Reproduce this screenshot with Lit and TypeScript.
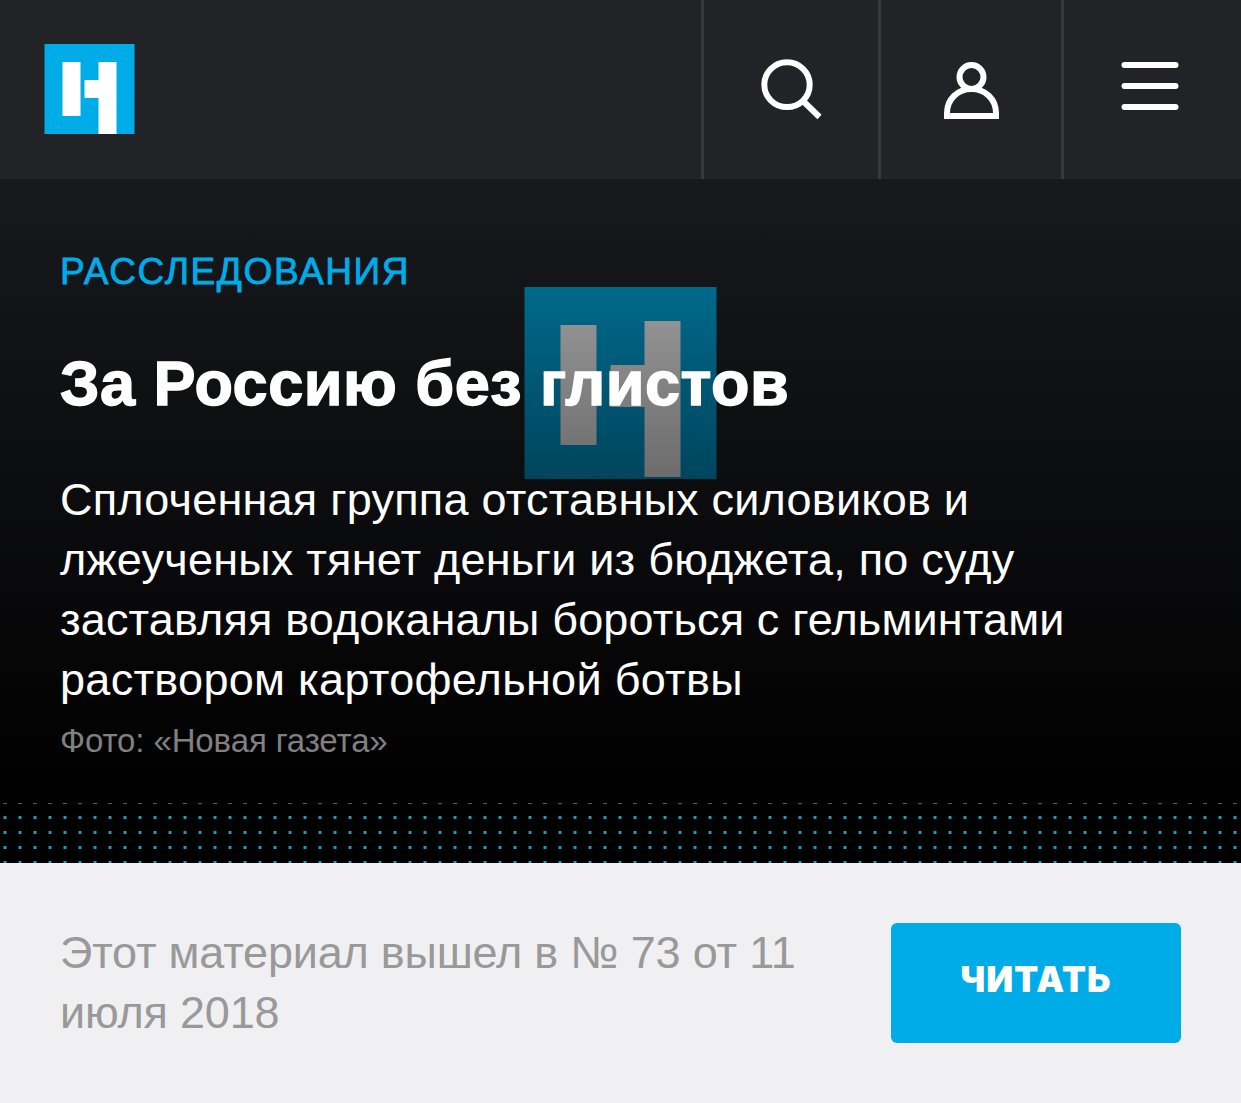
import {LitElement, html, css} from 'lit';
import {customElement} from 'lit/decorators.js';

@customElement('site-header')
export class SiteHeader extends LitElement {
  static styles = css`
    :host {
      display: flex;
      height: 179px;
      background: #222327;
    }

    .logo {
      width: 91px;
      height: 90px;
      margin: 44px auto 0 44px;
    }

    .cell {
      box-sizing: border-box;
      width: 177px;
      border-left: 3px solid #39393d;
    }

    .cell.user {
      width: 183px;
    }

    .cell.menu {
      width: 180px;
    }

    .icon {
      display: block;
      width: 100%;
      height: 100%;
      fill: none;
      stroke: #fff;
      stroke-width: 6;
    }
  `;

  render() {
    return html`
      <svg class="logo" viewBox="-0.5 0 91 90">
        <path fill="#00ace8" d="M0 0h90v90H0z" />
        <path fill="#fff" d="M18 18h18v54H18zM54 18h18v72H54V54H40V36h14z" />
      </svg>
      <div class="cell">
        <svg class="icon" viewBox="0 0 174 179">
          <ellipse cx="83" cy="84.700" rx="22.700" ry="22.400" />
          <path d="M99 101L115.500 117" />
        </svg>
      </div>
      <div class="cell user">
        <svg class="icon" viewBox="0 0 180 179">
          <circle cx="90.500" cy="77" r="12" />
          <path d="M66 116v-3C66 99 77 89 90.500 89S115 99 115 113v3z" />
        </svg>
      </div>
      <div class="cell menu">
        <svg class="icon" viewBox="0 0 177 179" stroke-linecap="round">
          <path d="M60.500 65h51M60.500 86h51M60.500 107h51" />
        </svg>
      </div>
    `;
  }
}

const LEAD = [
  {text: 'Сплоченная группа отставных силовиков и', spacing: 0.22},
  {text: 'лжеученых тянет деньги из бюджета, по суду', spacing: 0.22},
  {text: 'заставляя водоканалы бороться с гельминтами', spacing: 0.15},
  {text: 'раствором картофельной ботвы', spacing: 0.3},
];

@customElement('story-hero')
export class StoryHero extends LitElement {
  static styles = css`
    :host {
      display: block;
      position: relative;
      box-sizing: border-box;
      height: 684px;
      padding: 72px 60px 0;
      background: linear-gradient(#18191d, #000 91%);
      color: #fff;
    }

    .mark {
      position: absolute;
      top: 108px;
      left: 524px;
      width: 193px;
      height: 192px;
    }

    .content {
      position: relative;
    }

    .rubric {
      font-size: 37px;
      line-height: 42px;
      letter-spacing: 1.6px;
      text-transform: uppercase;
      color: #00ace8;
      -webkit-text-stroke: 0.8px;
    }

    .title {
      margin: 54px 0 0;
      font-size: 63px;
      line-height: 72px;
      letter-spacing: 0.5px;
      white-space: nowrap;
      -webkit-text-stroke: 1.4px;
    }

    .lead {
      margin: 51px 0 0;
      font-size: 45px;
      line-height: 60px;
      white-space: nowrap;
    }

    .line {
      display: block;
    }

    .credit {
      margin-top: 11px;
      font-size: 33px;
      line-height: 40px;
      letter-spacing: -0.12px;
      color: #808080;
    }

    .dots {
      position: absolute;
      bottom: 0;
      left: 0;
      width: 100%;
      height: 60px;
    }
  `;

  render() {
    return html`
      <svg class="mark" viewBox="-0.5 0 193 192">
        <defs>
          <linearGradient id="blue" x2="0" y2="1">
            <stop stop-color="#00698b" />
            <stop offset="1" stop-color="#00455d" />
          </linearGradient>
          <linearGradient id="grey" gradientUnits="userSpaceOnUse" x1="0" y1="34" x2="0" y2="190">
            <stop stop-color="#929292" />
            <stop offset="1" stop-color="#6c6c6c" />
          </linearGradient>
        </defs>
        <path fill="url(#blue)" d="M0 0h192v192H0z" />
        <path fill="url(#grey)" d="M36 38h36v120H36zM120 34h36v156h-36v-70H86V78h34z" />
      </svg>
      <div class="content">
        <div class="rubric">Расследования</div>
        <h1 class="title">За Россию без глистов</h1>
        <p class="lead">
          ${LEAD.map(
            (line) => html`<span class="line" style="letter-spacing: ${line.spacing}px">${line.text}</span>`
          )}
        </p>
        <div class="credit">Фото: «Новая газета»</div>
      </div>
      <svg class="dots">
        <defs>
          <pattern id="dot" x="0" y="7" width="15" height="15" patternUnits="userSpaceOnUse">
            <rect x="3.500" y="6" width="3" height="3" rx="0.500" fill="#2399b8" />
          </pattern>
          <pattern id="dash" width="15" height="15" patternUnits="userSpaceOnUse">
            <rect x="3" y="0" width="4" height="1" fill="#4b626b" />
          </pattern>
        </defs>
        <rect width="100%" height="1" fill="url(#dash)" />
        <rect y="7" width="100%" height="53" fill="url(#dot)" />
      </svg>
    `;
  }
}

@customElement('issue-bar')
export class IssueBar extends LitElement {
  static styles = css`
    :host {
      display: flex;
      justify-content: space-between;
      align-items: flex-start;
      box-sizing: border-box;
      height: 240px;
      padding: 60px 60px 0;
      background: #f0f0f2;
    }

    .note {
      margin: 0;
      font-size: 45px;
      line-height: 60px;
      letter-spacing: -0.2px;
      white-space: nowrap;
      color: #999;
    }

    .read {
      width: 290px;
      height: 120px;
      padding: 0 0 8px;
      border: 0;
      border-radius: 6px;
      background: #00ace8;
      color: #fff;
      font: 900 35px Inter, sans-serif;
      letter-spacing: 1.1px;
      text-transform: uppercase;
    }
  `;

  render() {
    return html`
      <p class="note">Этот материал вышел в № 73 от 11<br />июля 2018</p>
      <button class="read">Читать</button>
    `;
  }
}

@customElement('app-root')
export class AppRoot extends LitElement {
  static styles = css`
    :host {
      display: block;
      font-family: 'Liberation Sans', Arial, sans-serif;
    }
  `;

  render() {
    return html`
      <site-header></site-header>
      <story-hero></story-hero>
      <issue-bar></issue-bar>
    `;
  }
}
